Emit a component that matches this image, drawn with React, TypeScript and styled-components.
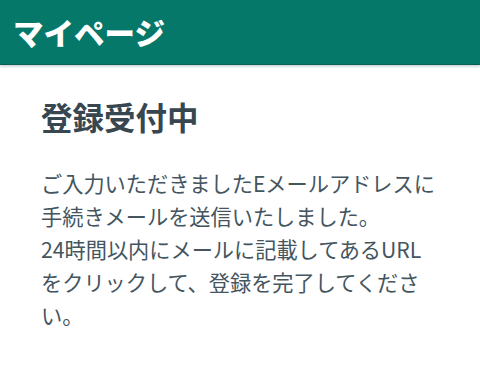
import React from 'react';
import styled, { createGlobalStyle } from 'styled-components';

const GlobalStyle = createGlobalStyle`
  html, body {
    margin: 0;
    padding: 0;
    background: #ffffff;
    font-family: "Noto Sans CJK JP", "Noto Sans", sans-serif;
  }
`;

export default function App() {
  return (
    <>
      <GlobalStyle />
      <Page>
        <Header>
          <HeaderTitle>マイページ</HeaderTitle>
        </Header>
        <Main>
          <Title>登録受付中</Title>
          <Message>
            ご入力いただきましたEメールアドレスに手続きメールを送信いたしました。
            <br />
            24時間以内にメールに記載してあるURLをクリックして、登録を完了してください。
          </Message>
        </Main>
      </Page>
    </>
  );
}

const Page = styled.div`
  min-height: 366px;
  background: #ffffff;
`;

const Header = styled.header`
  height: 64px;
  display: flex;
  align-items: center;
  padding: 0 13px;
  background: #05786a;
  border-bottom: 1px solid #0b5f55;
  box-shadow: 0 2px 2px rgba(120, 150, 150, 0.35);
`;

const HeaderTitle = styled.h1`
  margin: 0;
  font-size: 30.5px;
  font-weight: 800;
  color: #ffffff;
`;

const Main = styled.main`
  padding: 27px 40px 0 41px;
`;

const Title = styled.h2`
  margin: 0 0 26px;
  font-size: 31.5px;
  line-height: 48px;
  font-weight: 700;
  color: #37464f;
`;

const Message = styled.p`
  margin: 0;
  font-size: 21.2px;
  line-height: 33px;
  color: #445560;
`;
